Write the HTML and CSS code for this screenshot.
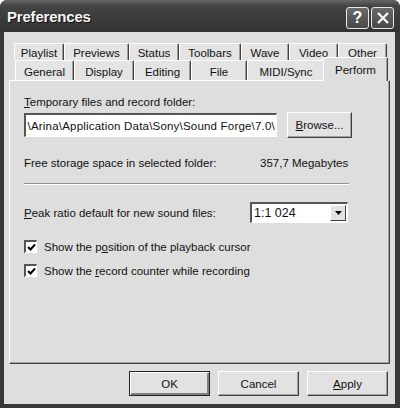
FILE: index.html
```html
<!DOCTYPE html>
<html lang="en">

<head>
    <meta charset="utf-8">
    <title>Preferences</title>
    <link rel="stylesheet" href="styles.css">
</head>

<body>

    <div class="window">
        <div class="titlebar">
            <span class="title">Preferences</span>
            <div class="caption-buttons">
                <button class="caption-btn">?</button>
                <button class="caption-btn">
                    <svg width="14" height="14" viewBox="0 0 14 14">
                        <path d="M2 2 L12 12 M12 2 L2 12" stroke="#fff" stroke-width="2.2" fill="none"/>
                    </svg>
                </button>
            </div>
        </div>

        <div class="client">
            <!-- Tab strip, two rows -->
            <div class="tabs">
                <div class="tab-row back">
                    <div class="tab">Playlist</div>
                    <div class="tab">Previews</div>
                    <div class="tab">Status</div>
                    <div class="tab">Toolbars</div>
                    <div class="tab">Wave</div>
                    <div class="tab">Video</div>
                    <div class="tab">Other</div>
                </div>
                <div class="tab-row front">
                    <div class="tab">General</div>
                    <div class="tab">Display</div>
                    <div class="tab">Editing</div>
                    <div class="tab">File</div>
                    <div class="tab">MIDI/Sync</div>
                    <div class="tab selected">Perform</div>
                </div>
            </div>

            <div class="panel">
                <div class="field-label"><u>T</u>emporary files and record folder:</div>
                <div class="path-row">
                    <div class="textbox"><span class="path-text">\Arina\Application Data\Sony\Sound Forge\7.0\</span></div>
                    <button class="btn browse"><u>B</u>rowse...</button>
                </div>

                <div class="storage-row">
                    <span class="storage-label">Free storage space in selected folder:</span>
                    <span>357,7 Megabytes</span>
                </div>

                <div class="separator"></div>

                <div class="peak-row">
                    <span class="peak-label"><u>P</u>eak ratio default for new sound files:</span>
                    <div class="combo">
                        <span class="combo-value">1:1 024</span>
                        <span class="combo-arrow">
                            <svg width="7" height="4" viewBox="0 0 7 4"><path d="M0 0 H7 L3.5 4 Z" fill="#000"/></svg>
                        </span>
                    </div>
                </div>

                <label class="check-row">
                    <span class="checkbox">
                        <svg width="9" height="9" viewBox="0 0 9 9"><path d="M1 4 L3.5 6.5 L8 1.5" stroke="#000" stroke-width="2" fill="none"/></svg>
                    </span>
                    <span>Show the p<u>o</u>sition of the playback cursor</span>
                </label>
                <label class="check-row">
                    <span class="checkbox">
                        <svg width="9" height="9" viewBox="0 0 9 9"><path d="M1 4 L3.5 6.5 L8 1.5" stroke="#000" stroke-width="2" fill="none"/></svg>
                    </span>
                    <span>Show the <u>r</u>ecord counter while recording</span>
                </label>
            </div>

            <div class="dialog-buttons">
                <button class="btn default">OK</button>
                <button class="btn">Cancel</button>
                <button class="btn"><u>A</u>pply</button>
            </div>
        </div>
    </div>

</body>

</html>
```

FILE: styles.css
```css
body {
    margin: 0;
    padding: 0;
    font-family: "Liberation Sans", Arial, sans-serif;
    font-size: 11.5px;
    color: #111;
    background: #fff;
}

.window {
    width: 400px;
    height: 408px;
    display: flex;
    flex-direction: column;
    background: #383838;
    border-radius: 7px 7px 0 0;
    overflow: hidden;
}

.titlebar {
    height: 32px;
    flex: none;
    display: flex;
    align-items: center;
    justify-content: space-between;
    padding: 0 6px 0 7px;
    background: linear-gradient(#666, #444 18%, #3a3a3a 60%, #333);
}

.title {
    color: #f4f4f4;
    font-weight: bold;
    font-size: 15px;
    letter-spacing: -0.2px;
    text-shadow: 1px 1px 0 #111;
    padding-top: 1px;
}

.caption-buttons {
    display: flex;
    gap: 2px;
    padding-top: 3px;
}

.caption-btn {
    width: 23px;
    height: 22px;
    padding: 0;
    border: 1px solid #e8e8e8;
    border-radius: 3px;
    background: linear-gradient(#6a6a6a, #484848);
    color: #fff;
    font-family: "Liberation Sans", Arial, sans-serif;
    font-weight: bold;
    font-size: 16px;
    display: flex;
    align-items: center;
    justify-content: center;
}

.client {
    flex: 1;
    margin: 0 5px 4px 4px;
    background: #dedede;
    display: flex;
    flex-direction: column;
}

/* tabs */
.tabs {
    padding-top: 11px;
}

.tab-row {
    display: flex;
}

.tab-row.back {
    height: 17px;
    margin-left: 10px;
}

.tab-row.front {
    height: 20px;
    margin-left: 11px;
    position: relative;
    z-index: 1;
}

.tab {
    flex: none;
    box-sizing: border-box;
    display: flex;
    align-items: center;
    justify-content: center;
    background: #e4e4e4;
    border-top: 1px solid #fff;
    border-left: 1px solid #fff;
    border-right: 1px solid #404040;
    box-shadow: inset -1px 0 0 #a0a0a0;
    border-radius: 2px 2px 0 0;
    white-space: nowrap;
}

.tab-row.back .tab {
    padding-top: 1px;
}

.tab-row.back .tab:nth-child(1) { width: 50px; }
.tab-row.back .tab:nth-child(2) { width: 65px; }
.tab-row.back .tab:nth-child(3) { width: 50px; }
.tab-row.back .tab:nth-child(4) { width: 62px; }
.tab-row.back .tab:nth-child(5) { width: 48px; }
.tab-row.back .tab:nth-child(6) { width: 49px; }
.tab-row.back .tab:nth-child(7) { width: 49px; }

.tab-row.front .tab {
    padding-top: 3px;
}

.tab-row.front .tab:nth-child(1) { width: 59px; }
.tab-row.front .tab:nth-child(2) { width: 60px; }
.tab-row.front .tab:nth-child(3) { width: 57px; }
.tab-row.front .tab:nth-child(4) { width: 56px; }
.tab-row.front .tab:nth-child(5) { width: 78px; }

.tab.selected {
    width: 65px;
    margin: -3px -2px -1px -2px;
    padding: 0 0 2px 0;
    background: #dedede;
}

.panel {
    margin-left: 5px;
    width: 381px;
    height: 284px;
    box-sizing: border-box;
    border-top: 1px solid #fff;
    border-left: 1px solid #fff;
    border-right: 1px solid #404040;
    border-bottom: 1px solid #404040;
    box-shadow: inset -1px -1px 0 #a0a0a0;
    padding: 14px 0 0 14px;
}

.field-label {
    line-height: 14px;
}

.path-row {
    display: flex;
    align-items: center;
    gap: 10px;
    margin-top: 3px;
}

.textbox {
    width: 253px;
    height: 24px;
    box-sizing: border-box;
    background: #fff;
    border-top: 2px solid #555;
    border-left: 2px solid #555;
    border-right: 1px solid #fff;
    border-bottom: 1px solid #fff;
    overflow: hidden;
    white-space: nowrap;
    display: flex;
    align-items: center;
    justify-content: flex-end;
    padding-right: 1px;
}

.path-text {
    flex: none;
    letter-spacing: 0.2px;
}

.btn {
    width: 81px;
    height: 25px;
    box-sizing: border-box;
    padding: 0;
    font-family: "Liberation Sans", Arial, sans-serif;
    font-size: 11.5px;
    color: #111;
    background: #e2e2e2;
    border-top: 1px solid #fff;
    border-left: 1px solid #fff;
    border-right: 1px solid #404040;
    border-bottom: 1px solid #404040;
    box-shadow: inset -1px -1px 0 #a0a0a0;
}

.btn.browse {
    width: 65px;
    height: 26px;
}

.btn.default {
    border: 1px solid #222;
    box-shadow: inset 1px 1px 0 #fff, inset -2px -2px 0 #808080;
}

.storage-row {
    display: flex;
    margin-top: 18px;
    line-height: 14px;
}

.storage-label {
    width: 236px;
}

.separator {
    width: 325px;
    height: 1px;
    margin-top: 13px;
    background: #909090;
    border-bottom: 1px solid #fff;
}

.peak-row {
    display: flex;
    align-items: center;
    margin-top: 17px;
}

.peak-label {
    width: 226px;
}

.combo {
    width: 98px;
    height: 21px;
    box-sizing: border-box;
    background: #fff;
    border-top: 2px solid #555;
    border-left: 2px solid #555;
    border-right: 1px solid #fff;
    border-bottom: 1px solid #fff;
    display: flex;
    align-items: center;
    justify-content: space-between;
}

.combo-value {
    padding-left: 2px;
    font-size: 12.5px;
}

.combo-arrow {
    width: 16px;
    height: 16px;
    margin-right: 1px;
    box-sizing: border-box;
    background: #e2e2e2;
    border-top: 1px solid #fff;
    border-left: 1px solid #fff;
    border-right: 1px solid #404040;
    border-bottom: 1px solid #404040;
    display: flex;
    align-items: center;
    justify-content: center;
}

.check-row {
    display: flex;
    align-items: center;
    gap: 7px;
    height: 13px;
    margin-top: 11px;
}

.peak-row + .check-row {
    margin-top: 17px;
}

.checkbox {
    width: 13px;
    height: 13px;
    box-sizing: border-box;
    background: #fff;
    border-top: 2px solid #555;
    border-left: 2px solid #555;
    border-right: 1px solid #fff;
    border-bottom: 1px solid #fff;
    display: flex;
    align-items: center;
    justify-content: center;
}

.dialog-buttons {
    display: flex;
    justify-content: flex-end;
    gap: 8px;
    padding: 7px 7px 0 0;
}
```
